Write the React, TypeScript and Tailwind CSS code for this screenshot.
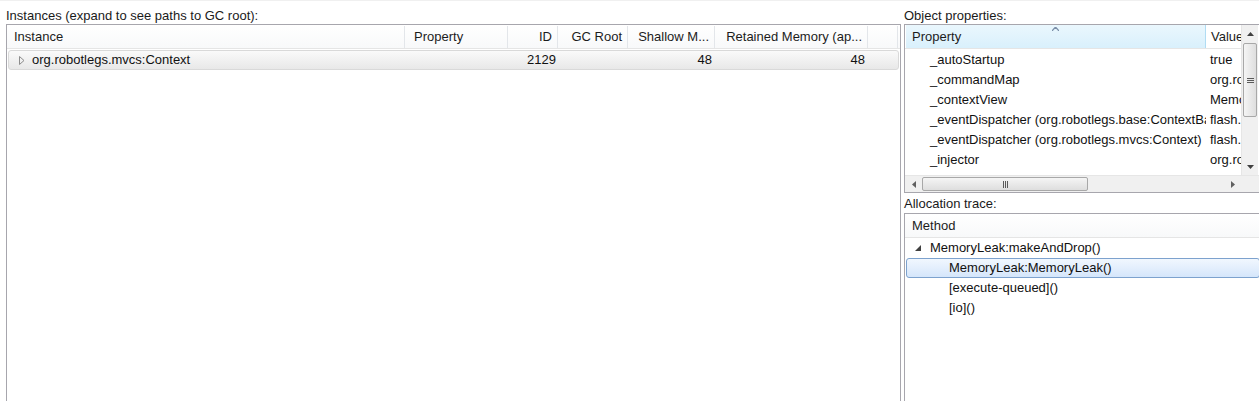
import React from 'react';

const font = "font-['Liberation_Sans',Arial,sans-serif]";

const HeaderCell: React.FC<{ w: string; align?: 'left' | 'right'; pad?: string; children?: React.ReactNode }> = ({ w, align = 'left', pad = 'pl-[7px]', children }) => (
    <div className={`${w} h-full flex items-center border-r border-[#e3e6ea] whitespace-nowrap overflow-hidden ${align === 'right' ? 'justify-end pr-[5px]' : pad}`}>
        {children}
    </div>
);

const UpArrow = () => (
    <svg width="7" height="4" viewBox="0 0 7 4"><path d="M0 4 L3.5 0 L7 4 Z" fill="#404040" /></svg>
);
const DownArrow = () => (
    <svg width="7" height="4" viewBox="0 0 7 4"><path d="M0 0 L3.5 4 L7 0 Z" fill="#404040" /></svg>
);
const LeftArrow = () => (
    <svg width="4" height="7" viewBox="0 0 4 7"><path d="M4 0 L0 3.5 L4 7 Z" fill="#606060" /></svg>
);
const RightArrow = () => (
    <svg width="4" height="7" viewBox="0 0 4 7"><path d="M0 0 L4 3.5 L0 7 Z" fill="#606060" /></svg>
);

const InstancesPanel: React.FC = () => (
    <div className="w-[895px] ml-[6px] flex flex-col">
        <div className="h-[23px] pt-[6px] text-[13px] leading-[18px] text-[#1a1a1a]">Instances (expand to see paths to GC root):</div>
        <div className="flex-1 border border-b-0 border-[#a7a6ad] bg-white">
            <div className="h-[24px] pt-[1px] flex text-[13px] text-[#1c1c1c] bg-gradient-to-b from-white to-[#f8f9fa] border-b border-[#e5e5e5]">
                <HeaderCell w="w-[398px]">Instance</HeaderCell>
                <HeaderCell w="w-[103px]" pad="pl-[9px]">Property</HeaderCell>
                <HeaderCell w="w-[50px]" align="right">ID</HeaderCell>
                <HeaderCell w="w-[70px]" align="right">GC Root</HeaderCell>
                <HeaderCell w="w-[87px]" align="right">Shallow M...</HeaderCell>
                <HeaderCell w="w-[153px]" align="right">Retained Memory (ap...</HeaderCell>
                <div className="w-[30px] h-full border-r border-[#e3e6ea]" />
            </div>
            <div className="mt-[1px] ml-[1px] w-[891px] h-[20px] flex items-center text-[13px] text-[#111] rounded-[3px] border border-[#d9d9d9] bg-gradient-to-b from-[#fafafa] to-[#e8e8e8]">
                <div className="w-[396px] flex items-center pl-[10px]">
                    <svg width="6" height="9" viewBox="0 0 6 9" className="mr-[7px]"><path d="M0.5 0.5 L5 4.5 L0.5 8.5 Z" fill="none" stroke="#8c8c8c" /></svg>
                    <span>org.robotlegs.mvcs:Context</span>
                </div>
                <div className="w-[103px]" />
                <div className="w-[50px] text-right pr-[2px]">2129</div>
                <div className="w-[70px]" />
                <div className="w-[87px] text-right pr-[3px]">48</div>
                <div className="w-[153px] text-right pr-[3px]">48</div>
            </div>
        </div>
    </div>
);

const props: [string, string][] = [
    ['_autoStartup', 'true'],
    ['_commandMap', 'org.robotlegs'],
    ['_contextView', 'MemoryLeak'],
    ['_eventDispatcher (org.robotlegs.base:ContextBase)', 'flash.events'],
    ['_eventDispatcher (org.robotlegs.mvcs:Context)', 'flash.events'],
    ['_injector', 'org.robotlegs'],
];

const PropertiesPanel: React.FC = () => (
    <div className="flex flex-col">
        <div className="h-[23px] pt-[6px] text-[13px] leading-[18px] text-[#1a1a1a]">Object properties:</div>
        <div className="h-[169px] w-[357px] border border-[#a7a6ad] flex flex-col">
            <div className="flex flex-1 min-h-0">
                <div className="w-[336px] flex flex-col overflow-hidden">
                    <div className="h-[24px] flex text-[13px] text-[#1c1c1c] border-b border-[#e5e5e5] shrink-0">
                        <div className="relative w-[300px] ml-[1px] h-full flex items-center pl-[6px] pt-[1px] bg-gradient-to-b from-[#eaf7fd] to-[#d9f0fc] border-r border-[#b0dcf3]">
                            Property
                            <div className="absolute left-[146px] top-[2px]">
                                <svg width="7" height="4" viewBox="0 0 7 4"><path d="M0 4 L3.5 0 L7 4" fill="none" stroke="#7a8ea8" strokeWidth="1.2" /></svg>
                            </div>
                        </div>
                        <div className="flex-1 h-full flex items-center pl-[5px] pt-[1px] whitespace-nowrap overflow-hidden">Value</div>
                    </div>
                    <div className="flex-1 overflow-hidden pt-[1px]">
                        {props.map(([k, v]) => (
                            <div key={k} className="h-[20px] flex items-center text-[13px] text-[#111]">
                                <div className="w-[301px] pl-[25px] whitespace-nowrap overflow-hidden">{k}</div>
                                <div className="flex-1 pl-[4px] whitespace-nowrap overflow-hidden">{v}</div>
                            </div>
                        ))}
                    </div>
                </div>
                <div className="w-[17px] flex flex-col bg-[#f0f0f0] border-l border-[#e6e6e6]">
                    <div className="h-[17px] flex items-center justify-center"><UpArrow /></div>
                    <div className="mx-[1px] mt-[1px] h-[74px] rounded-[2px] border border-[#a8a8a8] bg-gradient-to-r from-[#f5f5f5] to-[#dedede] flex items-center justify-center">
                        <div className="flex flex-col gap-[1px]">
                            <div className="w-[7px] h-[1px] bg-[#5a5a5a]" />
                            <div className="w-[7px] h-[1px] bg-[#5a5a5a]" />
                            <div className="w-[7px] h-[1px] bg-[#5a5a5a]" />
                        </div>
                    </div>
                    <div className="flex-1" />
                    <div className="h-[17px] flex items-center justify-center"><DownArrow /></div>
                </div>
            </div>
            <div className="h-[17px] flex bg-[#f0f0f0] border-t border-[#e6e6e6]">
                <div className="w-[17px] flex items-center justify-center"><LeftArrow /></div>
                <div className="w-[166px] my-[1px] rounded-[2px] border border-[#a8a8a8] bg-gradient-to-b from-[#f5f5f5] to-[#dedede] flex items-center justify-center">
                    <div className="flex gap-[1px]">
                        <div className="w-[1px] h-[7px] bg-[#5a5a5a]" />
                        <div className="w-[1px] h-[7px] bg-[#5a5a5a]" />
                        <div className="w-[1px] h-[7px] bg-[#5a5a5a]" />
                    </div>
                </div>
                <div className="flex-1" />
                <div className="w-[17px] flex items-center justify-center"><RightArrow /></div>
                <div className="w-[19px] bg-[#f0f0f0]" />
            </div>
        </div>
    </div>
);

const AllocationPanel: React.FC = () => (
    <div className="flex flex-col flex-1">
        <div className="h-[20px] pt-[2px] text-[13px] leading-[18px] text-[#1a1a1a]">Allocation trace:</div>
        <div className="flex-1 w-[357px] border border-b-0 border-[#a7a6ad]">
            <div className="h-[24px] flex items-center pl-[7px] text-[13px] text-[#1c1c1c] border-b border-[#e5e5e5] bg-gradient-to-b from-white to-[#f8f9fa]">Method</div>
            <div className="h-[20px] flex items-center text-[13px] text-[#111] pl-[10px]">
                <svg width="6" height="6" viewBox="0 0 6 6" className="mr-[9px]"><path d="M6 0 L6 6 L0 6 Z" fill="#404040" /></svg>
                MemoryLeak:makeAndDrop()
            </div>
            <div className="ml-[1px] h-[20px] flex items-center text-[13px] text-[#111] pl-[42px] rounded-[3px] border border-[#7da2ce] bg-gradient-to-b from-[#f1f7fe] to-[#d5e6fb]">
                MemoryLeak:MemoryLeak()
            </div>
            <div className="h-[20px] flex items-center text-[13px] text-[#111] pl-[44px]">[execute-queued]()</div>
            <div className="h-[20px] flex items-center text-[13px] text-[#111] pl-[44px]">[io]()</div>
        </div>
    </div>
);

export default function App() {
    return (
        <div className={`w-[1259px] h-[401px] overflow-hidden bg-white border-t border-[#f0f0f0] flex ${font}`}>
            <InstancesPanel />
            <div className="ml-[3px] flex flex-col w-[355px]">
                <PropertiesPanel />
                <AllocationPanel />
            </div>
        </div>
    );
}
